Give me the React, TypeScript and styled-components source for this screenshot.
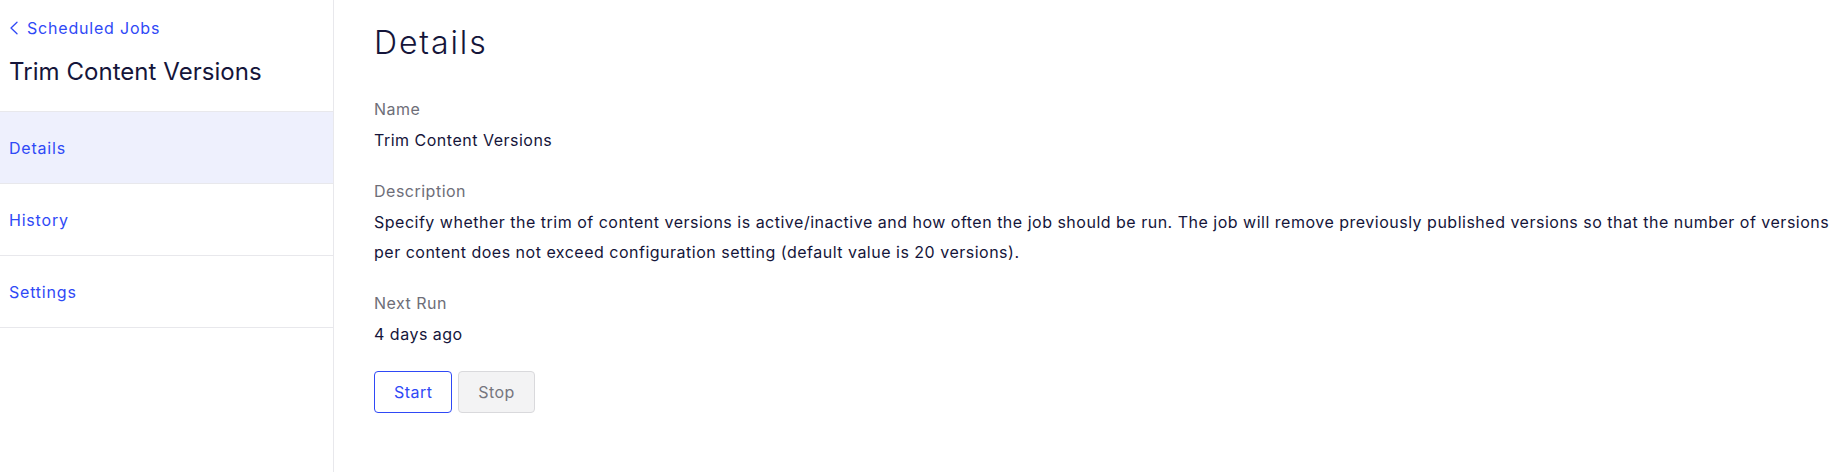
import React from "react";
import styled, { createGlobalStyle } from "styled-components";

const GlobalStyle = createGlobalStyle`
  html, body {
    margin: 0;
    padding: 0;
    background: #ffffff;
  }
  body {
    font-family: Inter, "Noto Sans", Arial, sans-serif;
    color: #1b1b3a;
  }
  * { box-sizing: border-box; }
`;

const Page = styled.div`
  display: flex;
  width: 1843px;
  min-height: 472px;
`;

const Sidebar = styled.aside`
  width: 334px;
  flex-shrink: 0;
  border-right: 1px solid #e8e8ec;
  display: flex;
  flex-direction: column;
`;

const SidebarHeader = styled.div`
  display: flex;
  flex-direction: column;
  padding: 16px 0 0 9px;
  height: 111px;
`;

const BackLink = styled.a`
  display: flex;
  align-items: center;
  gap: 8px;
  color: #2f49f6;
  font-size: 16px;
  line-height: 24px;
  letter-spacing: 0.8px;
  text-decoration: none;
  cursor: pointer;

  svg {
    flex-shrink: 0;
  }
`;

const PageTitle = styled.h1`
  margin: 16px 0 0 0;
  font-size: 24px;
  line-height: 32px;
  font-weight: 400;
  letter-spacing: 0.05px;
  color: #15153a;
`;

const NavList = styled.nav`
  display: flex;
  flex-direction: column;
  border-top: 1px solid #e8e8ec;
`;

const NavItem = styled.a<{ $active?: boolean }>`
  display: flex;
  align-items: center;
  height: 72px;
  padding-left: 9px;
  border-bottom: 1px solid #e8e8ec;
  background: ${(p) => (p.$active ? "#eef0fd" : "#ffffff")};
  color: #2f49f6;
  font-size: 16px;
  letter-spacing: 0.8px;
  text-decoration: none;
  cursor: pointer;
`;

const Main = styled.main`
  flex: 1;
  padding: 19px 12px 40px 40px;
  display: flex;
  flex-direction: column;
`;

const Heading = styled.h2`
  margin: 0 0 30px 0;
  font-size: 32px;
  line-height: 48px;
  font-weight: 300;
  letter-spacing: 1.9px;
  color: #15153a;
`;

const Field = styled.div`
  display: flex;
  flex-direction: column;
  gap: 4px;
  margin-bottom: 24px;
`;

const Label = styled.div`
  font-size: 16px;
  line-height: 24px;
  letter-spacing: 0.5px;
  color: #6e6e78;
`;

const Value = styled.div`
  font-size: 16px;
  line-height: 30px;
  letter-spacing: 0.5px;
  color: #15153a;
`;

const Actions = styled.div`
  display: flex;
  gap: 6px;
  margin-top: -2px;
`;

const Button = styled.button<{ $variant: "primary" | "disabled" }>`
  height: 42px;
  padding: 0 19px;
  font-family: inherit;
  font-size: 16px;
  letter-spacing: 0.45px;
  border-radius: 4px;
  cursor: ${(p) => (p.$variant === "disabled" ? "default" : "pointer")};
  border: 1px solid ${(p) => (p.$variant === "disabled" ? "#d9d9dc" : "#2f49f6")};
  background: ${(p) => (p.$variant === "disabled" ? "#f3f3f4" : "#ffffff")};
  color: ${(p) => (p.$variant === "disabled" ? "#76767e" : "#2f49f6")};
`;

const Chevron = () => (
  <svg width="10" height="14" viewBox="0 0 10 14" fill="none">
    <path d="M8 1.2L2 7l6 5.8" stroke="currentColor" strokeWidth="1.3" strokeLinecap="round" strokeLinejoin="round" />
  </svg>
);

export default function App() {
  return (
    <>
      <GlobalStyle />
      <Page>
        <Sidebar>
          <SidebarHeader>
            <BackLink>
              <Chevron />
              Scheduled Jobs
            </BackLink>
            <PageTitle>Trim Content Versions</PageTitle>
          </SidebarHeader>
          <NavList>
            <NavItem $active>Details</NavItem>
            <NavItem>History</NavItem>
            <NavItem>Settings</NavItem>
          </NavList>
        </Sidebar>
        <Main>
          <Heading>Details</Heading>
          <Field>
            <Label>Name</Label>
            <Value>Trim Content Versions</Value>
          </Field>
          <Field>
            <Label>Description</Label>
            <Value>
              Specify whether the trim of content versions is active/inactive and how often the job should be run. The job will remove previously published versions so that the number of versions per content does not exceed configuration setting (default value is 20 versions).
            </Value>
          </Field>
          <Field>
            <Label>Next Run</Label>
            <Value>4 days ago</Value>
          </Field>
          <Actions>
            <Button $variant="primary">Start</Button>
            <Button $variant="disabled" disabled>Stop</Button>
          </Actions>
        </Main>
      </Page>
    </>
  );
}
